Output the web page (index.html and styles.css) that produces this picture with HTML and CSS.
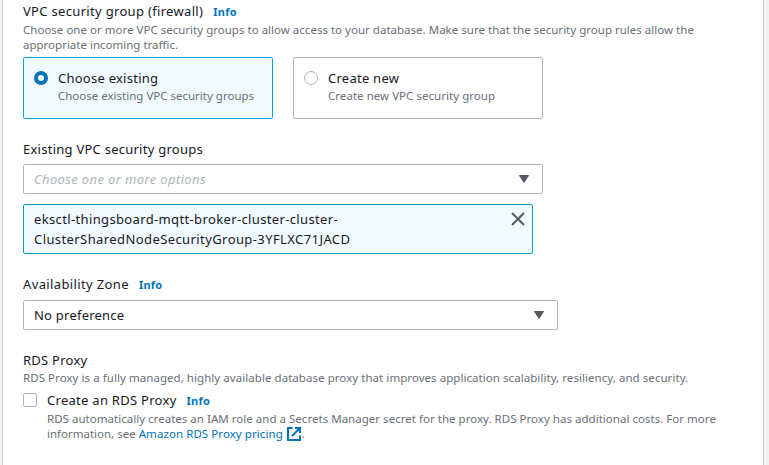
FILE: index.html
```html
<!DOCTYPE html>
<html lang="en">
<head>
<meta charset="utf-8">
<title>Connectivity</title>
<link rel="stylesheet" href="styles.css">
</head>
<body>
<main class="panel">
  <section class="field firewall">
    <div class="label"><span class="t-firewall">VPC security group (firewall)</span><a class="info">Info</a></div>
    <p class="hint"><span class="h-one">Choose one or more VPC security groups to allow access to your database. Make sure that the security group rules allow the</span><br><span class="h-two">appropriate incoming traffic.</span></p>
    <div class="tiles">
      <div class="tile selected">
        <span class="radio checked"></span>
        <div><div class="label t-existing">Choose existing</div><p class="hint h-existing">Choose existing VPC security groups</p></div>
      </div>
      <div class="tile">
        <span class="radio"></span>
        <div><div class="label t-new">Create new</div><p class="hint h-new">Create new VPC security group</p></div>
      </div>
    </div>
  </section>
  <section class="field groups">
    <div class="label"><span class="t-groups">Existing VPC security groups</span></div>
    <div class="select"><span class="placeholder">Choose one or more options</span><svg class="caret" viewBox="0 0 10 8"><path d="M0.5 0.5h9L5 7.5z"/></svg></div>
    <div class="token">
      <div class="token-text"><span class="k-one">eksctl-thingsboard-mqtt-broker-cluster-cluster-</span><br><span class="k-two">ClusterSharedNodeSecurityGroup-3YFLXC71JACD</span></div>
      <svg class="close" viewBox="0 0 14 14"><path d="M1 1l12 12M13 1L1 13"/></svg>
    </div>
  </section>
  <section class="field zone">
    <div class="label"><span class="t-zone">Availability Zone</span><a class="info">Info</a></div>
    <div class="select wide"><span class="t-none">No preference</span><svg class="caret" viewBox="0 0 10 8"><path d="M0.5 0.5h9L5 7.5z"/></svg></div>
  </section>
  <section class="field proxy">
    <div class="label"><span class="t-rds">RDS Proxy</span></div>
    <p class="hint"><span class="h-rds">RDS Proxy is a fully managed, highly available database proxy that improves application scalability, resiliency, and security.</span></p>
    <div class="option">
      <span class="checkbox"></span>
      <div>
        <div class="label"><span class="t-create">Create an RDS Proxy</span><a class="info">Info</a></div>
        <p class="hint"><span class="h-auto">RDS automatically creates an IAM role and a Secrets Manager secret for the proxy. RDS Proxy has additional costs. For more</span><br><span class="h-see">information, see </span><a class="link">Amazon RDS Proxy pricing</a><svg class="external" viewBox="0 0 14 14"><path d="M5.5 1H1v12h12V8.5M8 1h5v5M13 1L5 9"/></svg>.</p>
      </div>
    </div>
  </section>
</main>
</body>
</html>
```

FILE: styles.css
```css
* { box-sizing: border-box; }
body { margin: 0; height: 465px; overflow: hidden; background: #f2f3f3; font-family: "Noto Sans", sans-serif; color: #16191f; }
.panel { width: 762px; height: 465px; margin-left: 2px; padding: 1px 20px 0; background: #fff; border: solid #cad0d0; border-width: 0 1px; }
.label { font-size: 13px; line-height: 20px; height: 20px; letter-spacing: .25px; white-space: nowrap; }
.hint { margin: 0; font-size: 11.5px; line-height: 15px; letter-spacing: 0; color: #687078; white-space: nowrap; }
.info { margin-left: 10px; font-size: 11px; font-weight: 700; color: #0073bb; letter-spacing: .25px; }
.t-firewall { letter-spacing: .32px; }
.t-zone { letter-spacing: .37px; }
.t-create { letter-spacing: .28px; }
.h-one { letter-spacing: .015px; }
.h-rds { letter-spacing: .055px; }
.h-auto { letter-spacing: .025px; }
.h-new { letter-spacing: .04px; }
.k-one { letter-spacing: .36px; }
.k-two { letter-spacing: .41px; }
.tiles { display: flex; gap: 20px; margin-top: 5px; }
.tile { display: flex; width: 250px; height: 62px; padding: 10px; border: 1px solid #aab7b8; border-radius: 2px; }
.selected { background: #f1faff; border-color: #00a1c9; }
.radio { flex: none; width: 14px; height: 14px; margin: 3px 10px 0 0; border: 1px solid #aab7b8; border-radius: 50%; background: #fff; }
.radio.checked { border: 4px solid #0073bb; }
.firewall > .hint { margin-top: 1px; }
.groups { margin-top: 20px; }
.select { display: flex; align-items: center; justify-content: space-between; width: 520px; height: 30px; margin-top: 5px; padding: 0 13px 0 10px; border: 1px solid #aab7b8; border-radius: 2px; font-size: 13px; letter-spacing: .23px; }
.wide { width: 535px; margin-top: 6px; }
.placeholder { font-style: italic; color: #aab7b8; letter-spacing: .37px; }
.caret { width: 10px; height: 8px; fill: #545b64; stroke: #545b64; stroke-linejoin: round; }
.token { display: flex; justify-content: space-between; width: 510px; height: 50px; margin-top: 10px; padding: 4px 7px 0 10px; background: #f1faff; border: 1px solid #00a1c9; border-radius: 2px; }
.token-text { font-size: 13px; line-height: 20px; white-space: nowrap; }
.close { width: 14px; height: 14px; margin-top: 3px; fill: none; stroke: #545b64; stroke-width: 2; }
.zone { margin-top: 20px; }
.proxy { margin-top: 20px; }
.option { display: flex; margin-top: 5px; }
.checkbox { flex: none; width: 14px; height: 14px; margin: 3px 10px 0 0; border: 1px solid #aab7b8; border-radius: 2px; }
.option .hint { margin-top: 1px; }
.link { color: #0073bb; letter-spacing: .07px; }
.external { width: 14px; height: 14px; margin: 0 1px 0 4px; vertical-align: -3px; fill: none; stroke: #0073bb; stroke-width: 2; }
```
